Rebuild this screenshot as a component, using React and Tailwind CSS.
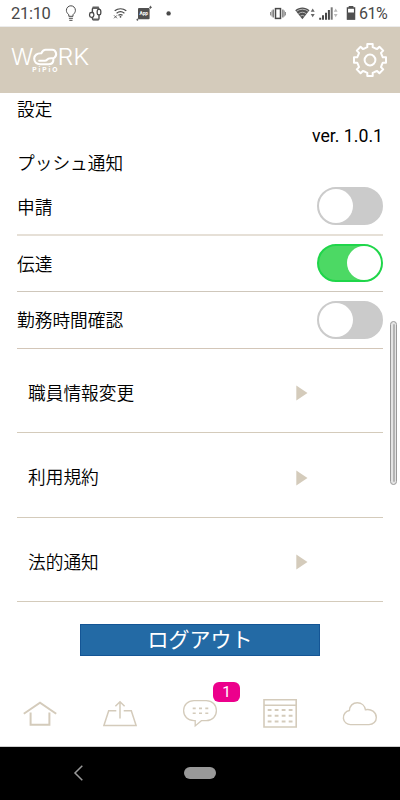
import { useState } from "react";
import clsx from "clsx";

const PUSH_ITEMS = [
  { id: "request", label: "申請", row: "h-[57px] border-b-2 border-[#e6e0d7]" },
  { id: "message", label: "伝達", row: "h-14 border-b border-[#cfc7bb]" },
  { id: "hours", label: "勤務時間確認", row: "h-[57px] border-b border-[#d3c6b8]" },
];

const LINKS = [
  { label: "職員情報変更", row: "h-[84px]" },
  { label: "利用規約", row: "h-[85px]" },
  { label: "法的通知", row: "h-[84px]" },
];

// Outline of a cog with eight square teeth, centred on 0,0
function cogPath() {
  const points = [];
  const tooth = [[-4.9, -11.8], [-2.7, -12.8], [-2.7, -16], [2.7, -16], [2.7, -12.8], [4.9, -11.8]];
  for (let i = 0; i < 8; i++) {
    const a = (i * Math.PI) / 4;
    tooth.forEach(([x, y]) => {
      const px = x * Math.cos(a) - y * Math.sin(a);
      const py = x * Math.sin(a) + y * Math.cos(a);
      points.push(`${px.toFixed(2)} ${py.toFixed(2)}`);
    });
  }
  return `M${points.join("L")}Z`;
}

function StatusBar() {
  return (
    <div className="flex h-[27px] shrink-0 justify-between border-b border-[#ececec] bg-white text-[#484848]">
      <div className="flex items-center pl-[11px]">
        <span className="w-[54px] text-[16.5px] leading-[27px] tracking-[-0.3px]">21:10</span>
        <svg width="120" height="26" viewBox="65 0 120 26" fill="none" stroke="currentColor">
          {/* bulb */}
          <path d="M68.8 16.3v-1.6c-1.6-1.3-2.4-2.7-2.4-4.4a4.5 4.5 0 0 1 9 0c0 1.7-.9 3.1-2.4 4.4v1.6zM68.9 18.3h4M69.3 20.3h3.2" strokeWidth="1" />
          {/* watch */}
          <rect x="92.4" y="8" width="6.6" height="11.6" rx="1" strokeWidth="1.4" />
          <path d="M92.6 6.4h6.2v2.4h-6.2zM92.6 18.4h6.2v2h-6.2z" fill="#606060" stroke="none" />
          <rect x="89.6" y="12.5" width="4.2" height="4.8" rx="1.8" fill="#fff" strokeWidth="1.3" />
          <rect x="97.2" y="9.4" width="3.6" height="5.4" rx="1.6" fill="#fff" strokeWidth="1.3" />
          {/* wifi, not connected */}
          <path d="M114.7 10.8a9.5 9.5 0 0 1 11.6 0M116.6 13.2a6.4 6.4 0 0 1 7.8 0M118.4 15.3a3.5 3.5 0 0 1 4.2 0" strokeWidth="1.2" />
          <path d="M114 15.3l3 3M117 15.3l-3 3" strokeWidth=".8" />
          <circle cx="120.5" cy="16.8" r=".9" fill="currentColor" stroke="none" />
          {/* app badge */}
          <rect x="138" y="8" width="11.6" height="11.2" rx="1" fill="#505050" stroke="none" />
          <text x="143.8" y="15.3" textAnchor="middle" fill="#fff" stroke="none" fontSize="4.8" fontWeight="700">App</text>
          <path d="M150.5 5.8v3M149 7.3h3M137.4 18.6v2.2M136.4 19.7h2" strokeWidth=".8" />
          <circle cx="168.6" cy="13.4" r="2.2" fill="currentColor" stroke="none" />
        </svg>
      </div>
      <div className="flex items-center pr-[11px]">
        <svg width="90" height="26" viewBox="269 0 90 26" fill="none" stroke="currentColor">
          {/* vibrate */}
          <rect x="275.5" y="8.6" width="5" height="9.8" strokeWidth="1.5" />
          <path d="M273.2 9.5v8M282.9 9.5v8" strokeWidth="1" />
          <path d="M270.6 12v3.4M285.4 12v3.4M272 10.5v6M284.2 10.5v6" strokeWidth=".9" stroke="#777" />
          {/* wifi */}
          <path d="M295.2 10.2c4.3-3.6 10-3.6 14.3 0L302.4 19.3z" fill="#505050" stroke="none" />
          <path d="M296.5 11.3a9.5 9.5 0 0 1 11.8 0M298.4 13.8a6.5 6.5 0 0 1 8 0M300.4 16.1a3.5 3.5 0 0 1 4 0" stroke="#fff" strokeWidth=".6" />
          <path d="M310.7 11.8l2-3.2 2 3.2zM310.7 14l2 3.2 2-3.2z" fill="#666" stroke="none" />
          {/* mobile signal */}
          <path d="M320.2 17.8v1.9M323 15.3v4.4M326 12.7v7M328.9 10.1v9.6" strokeWidth="2" />
          <path d="M331.7 7.3v12.4" strokeWidth="2" stroke="#777" />
          <path d="M333.8 11.8l1.9-3.2 1.9 3.2zM333.8 14l1.9 3.2 1.9-3.2z" fill="#bbb" stroke="none" />
          {/* battery */}
          <path d="M347.4 8h7.2v11.2h-7.2z" strokeWidth="1.3" />
          <path d="M347 12.5h8v7h-8zM348.7 6h4.7v2h-4.7z" fill="#505050" stroke="none" />
        </svg>
        <span className="w-[30px] text-[16px] leading-[27px] tracking-[-0.5px]">61%</span>
      </div>
    </div>
  );
}

function Header() {
  return (
    <header className="flex h-[66px] shrink-0 items-center justify-between bg-[#d4cbbb] pr-[11px] pl-2.5">
      <svg width="82" height="32" viewBox="10 44 82 32" fill="#fff" className="font-['Inter',sans-serif]">
        <text x="11" y="65" fontSize="22.6" fontWeight="350" textLength="22.3" lengthAdjust="spacingAndGlyphs">W</text>
        <text x="57.6" y="65" fontSize="22.6" fontWeight="350" textLength="31.8" lengthAdjust="spacingAndGlyphs">RK</text>
        <path
          d="M39.2 60.8h5.6c2 0 2.4-1.5 3.7-2.2 1-.5 5-.1 5.8-.8 3.4-2.4 1.7-8-2-8h-6.8c-2.3 0-3.4 1.8-4.2 3.4-4.3-.2-7.1 2-7.1 5.4 0 3.4 2.4 5.6 5.8 5.6h8.4c3.3 0 5-2 5-4.5"
          fill="none"
          stroke="#fff"
          strokeWidth="2.1"
          strokeLinecap="round"
          strokeLinejoin="round"
        />
        <text x="32.2" y="72" fontSize="6.8" fontWeight="700" textLength="25.4">PiPiO</text>
      </svg>
      <button aria-label="設定">
        <svg width="38" height="38" viewBox="-19 -19 38 38" fill="none" stroke="#fff" strokeWidth="2" strokeLinejoin="round">
          <path d={cogPath()} />
          <circle r="5.4" />
        </svg>
      </button>
    </header>
  );
}

function Toggle({ on, onClick }) {
  return (
    <button
      role="switch"
      aria-checked={on}
      onClick={onClick}
      className={clsx(
        "flex h-[38px] w-[66.5px] items-center rounded-full border-2",
        on ? "justify-end border-[#1fd64a] bg-[#4cd964]" : "justify-start border-[#cbcbcb] bg-[#cbcbcb]"
      )}
    >
      <span className="size-[34px] rounded-full bg-white" />
    </button>
  );
}

function BottomNav() {
  return (
    <nav className="flex h-[66px] shrink-0 items-center border-b border-[#cfcfcf] text-[#d4cbbb]">
      <a className="flex flex-1 justify-center">
        <svg width="36" height="32" viewBox="22 698 36 32" fill="none" stroke="currentColor" strokeWidth="2">
          <path d="M23.8 713.8L40 702.6l16.2 11.2M30.6 712.5v12.3h18.8v-12.3" />
        </svg>
      </a>
      <a className="flex flex-1 justify-center">
        <svg width="36" height="32" viewBox="102 698 36 32" fill="none" stroke="currentColor" strokeWidth="1.5">
          <path d="M116.3 710.8h-7.6l-4.8 14.8h32.2l-4.8-14.8h-7.6M120 718.5v-16.5M115.4 706.2l4.6-4.4 4.6 4.4" />
        </svg>
      </a>
      <a className="relative flex flex-1 justify-center">
        <svg width="36" height="32" viewBox="182 698 36 32" fill="none" stroke="currentColor" strokeWidth="1.3">
          <path d="M194 700.6h12.2c6.2 0 10.2 4.3 10.2 10s-4 10.1-10.2 10.1h-4.8l-6.2 5.2v-5.2H194c-6.2 0-10.4-4.3-10.4-10.1s4.2-10 10.4-10z" />
          <path d="M192.7 708.4h15.6M192.7 713.2h15.6" strokeDasharray="3 3.3" strokeWidth="1.6" />
        </svg>
        <span className="absolute -top-4 left-[53px] flex h-5 w-[27px] items-center justify-center rounded-md bg-[#ec008c] text-[15.5px] leading-5 text-white">
          1
        </span>
      </a>
      <a className="flex flex-1 justify-center">
        <svg width="36" height="32" viewBox="262 698 36 32" fill="none" stroke="currentColor" strokeWidth="1.6">
          <path d="M264 699.8h32.2v27.2h-32.2zM264 705.2h32" />
          <path d="M267.7 710h25M267.7 715.8h25M267.7 721.5h25" strokeDasharray="3.8 3.2" strokeWidth="1.9" />
        </svg>
      </a>
      <a className="flex flex-1 justify-center">
        <svg width="36" height="32" viewBox="342 698 36 32" fill="none" stroke="currentColor" strokeWidth="1.4">
          <path d="M351 724.6a7.1 7.1 0 0 1-1.6-14.1c.1-4.6 3.5-7.8 7.9-7.8 4.2 0 7.5 2.9 8.1 7 5.8-1.2 10.9 2.4 10.9 7.7 0 4.2-3 7.2-7.3 7.2z" />
        </svg>
      </a>
    </nav>
  );
}

export default function App() {
  const [push, setPush] = useState({ request: false, message: true, hours: false });

  const togglePush = (id) => setPush({ ...push, [id]: !push[id] });

  return (
    <div className="relative flex h-[800px] w-[400px] flex-col overflow-hidden bg-white font-['Roboto','Noto_Sans_CJK_JP',sans-serif] text-black">
      <StatusBar />
      <Header />

      <main className="flex h-[588px] shrink-0 flex-col px-[17px] pt-1 text-[17.7px] leading-[26.6px] font-[350]">
        <h1>設定</h1>
        <p className="-mt-px pb-px text-right font-normal">ver. 1.0.1</p>
        <h2 className="pt-px">プッシュ通知</h2>

        <section className="pt-px">
          {PUSH_ITEMS.map((item) => (
            <div key={item.id} className={clsx("flex items-center justify-between", item.row)}>
              <span className="pt-1">{item.label}</span>
              <Toggle on={push[item.id]} onClick={() => togglePush(item.id)} />
            </div>
          ))}
        </section>

        <section>
          {LINKS.map((link) => (
            <a
              key={link.label}
              className={clsx("flex items-center justify-between border-b border-[#d4cbbb] pr-[75px] pl-[11px]", link.row)}
            >
              <span className="pt-2">{link.label}</span>
              <svg width="12" height="16" viewBox="0 0 12 16" className="mt-1.5 fill-[#d4cbbb]">
                <path d="M.3 .5L11.5 8 .3 15.5z" />
              </svg>
            </a>
          ))}
        </section>

        <button className="mt-[22px] h-8 w-60 self-center border border-[#145595] bg-[#236aa5] text-[21px] leading-[30px] font-normal text-white">
          ログアウト
        </button>
      </main>

      <BottomNav />

      {/* Android navigation keys */}
      <div className="flex flex-1 items-center bg-black">
        <svg width="12" height="18" viewBox="0 0 12 18" fill="none" stroke="#999" strokeWidth="1.5" className="-mt-0.5 ml-[73px]">
          <path d="M9.3 1.8L2 9l7.3 7.2" />
        </svg>
        <span className="-mt-0.5 ml-[99px] h-3 w-8 rounded-full bg-[#999]" />
      </div>

      {/* scrollbar thumb */}
      <div className="absolute top-[321px] left-[390px] flex h-[164px] w-[7px] justify-center rounded-full border border-[#999] bg-[#e4e4e4] py-0.5">
        <span className="w-[2px] rounded-full bg-[#b4b4b4]" />
      </div>
    </div>
  );
}
